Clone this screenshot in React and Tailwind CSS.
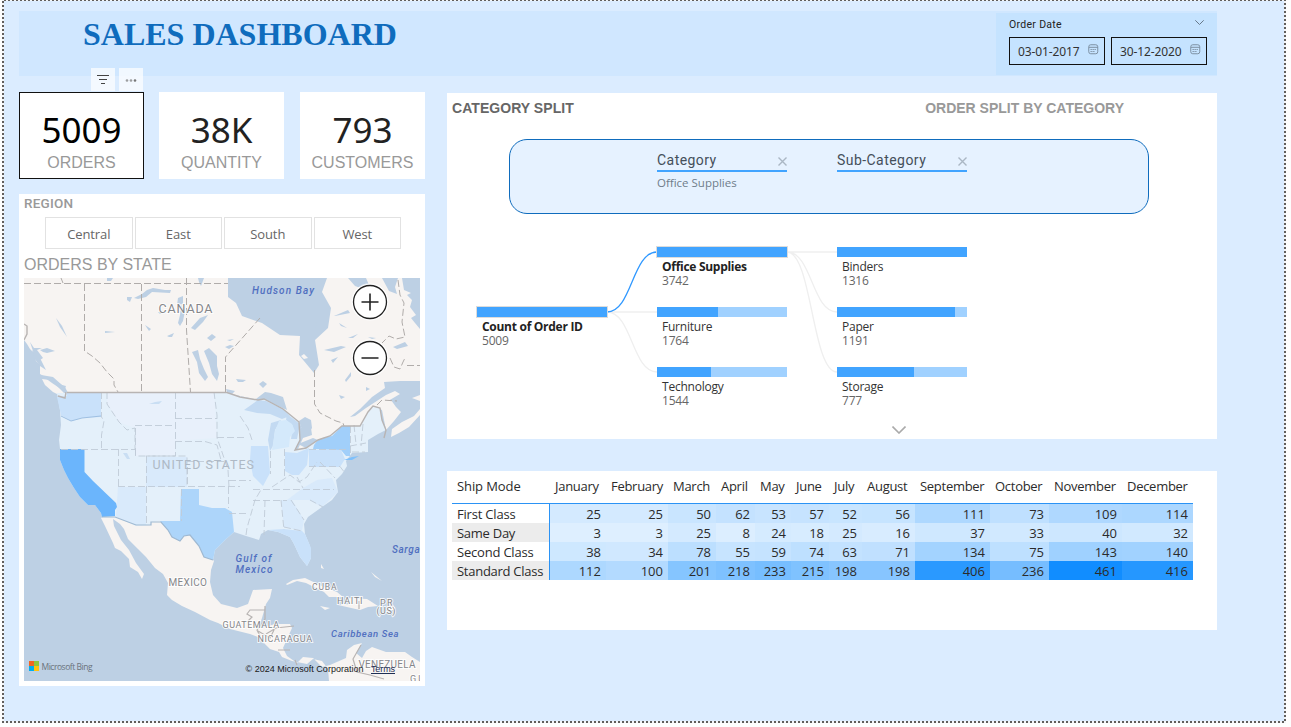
import React from "react";

const MONTHS = ["January", "February", "March", "April", "May", "June", "July", "August", "September", "October", "November", "December"];
const ROWS = [
  ["First Class", [25, 25, 50, 62, 53, 57, 52, 56, 111, 73, 109, 114]],
  ["Same Day", [3, 3, 25, 8, 24, 18, 25, 16, 37, 33, 40, 32]],
  ["Second Class", [38, 34, 78, 55, 59, 74, 63, 71, 134, 75, 143, 140]],
  ["Standard Class", [112, 100, 201, 218, 233, 215, 198, 198, 406, 236, 461, 416]],
];
const GRID = "grid grid-cols-[98px_56px_62px_48px_39px_36px_38px_33px_53px_75px_59px_73px_71px]";

function heat(value) {
  const t = (value - 3) / 458;
  return `rgb(${Math.round(222 - 205 * t)}, ${Math.round(239 - 98 * t)}, 255)`;
}

function Kpi({ value, label, selected }) {
  return (
    <div className={selected ? "h-[87px] w-[125px] border border-[#111] bg-white text-center text-black" : "h-[87px] w-[125px] border border-white bg-white text-center text-[#222]"}>
      <div className="mt-[16px] h-[42px] whitespace-nowrap font-['Noto_Sans',sans-serif] text-[35px] leading-[42px]">{value}</div>
      <div className="mt-px whitespace-nowrap font-['Liberation_Sans',sans-serif] text-[16px] leading-[22px] text-[#999]">{label}</div>
    </div>
  );
}

function CalendarIcon() {
  return (
    <svg className="mb-[3px] size-[11px]" viewBox="0 0 11 11" fill="none" stroke="#7d90a3">
      <rect x="0.75" y="0.75" width="9" height="9" rx="2" />
      <path d="M1 3.3H10" />
      <path d="M2.500 5.500H8.500M2.500 7.500H7" strokeDasharray="1.300 0.700" />
    </svg>
  );
}

function DateBox({ value }) {
  return (
    <div className="flex h-[28px] w-[96px] items-center justify-between border border-[#111] pr-[5px] pl-2 font-['Noto_Sans',sans-serif] text-[12px] text-[#333]">
      <span className="mt-px whitespace-nowrap tracking-[-0.12px]">{value}</span>
      <CalendarIcon />
    </div>
  );
}

function Level({ name, value }) {
  return (
    <div className="w-[130px]">
      <div className="flex h-[21px] items-start justify-between border-b-2 border-[#41a4ff]">
        <span className="-mt-px whitespace-nowrap font-['Roboto',sans-serif] text-[14px] leading-[20px] tracking-[0.45px] text-[#444f5a]">{name}</span>
        <svg className="mt-[6px] size-[9px]" viewBox="0 0 9 9" stroke="#aab7c4" strokeWidth="1.4"><path d="M0.5 0.5L8.5 8.5M8.5 0.5L0.5 8.5" /></svg>
      </div>
      <div className="mt-[3px] whitespace-nowrap font-['Open_Sans',sans-serif] text-[11.5px] leading-[16px] text-[#6f7d8a]">{value}</div>
    </div>
  );
}

function Node({ pos, name, value, fill, bold }) {
  return (
    <div className={`absolute w-[130px] ${pos}`}>
      <div className={bold ? "h-[10px] bg-[#a0d1ff] outline-1 outline-[#dcdcdc]" : "h-[10px] bg-[#a0d1ff]"}>
        <div className="h-full bg-[#41a4ff]" style={{ width: fill }} />
      </div>
      <div className={bold ? "mt-[3px] pl-[5px] text-[12px] font-bold leading-[14px] whitespace-nowrap tracking-[-0.28px] text-[#222]" : "mt-[3px] pl-[5px] text-[12px] leading-[14px] whitespace-nowrap tracking-[-0.22px] text-[#333]"}>{name}</div>
      <div className="pl-[5px] text-[12px] leading-[14px] tracking-[-0.2px] text-[#666]">{value}</div>
    </div>
  );
}

const LAKES = [
  "M134 298l8-4 5-4 6-2 12 2 6 0-1 3-18-1-6 5-8 2z", "M127 297l5 0-2 5-3-2z", "M178 298l5-2 0 8-6 1zM181 305l4 6-2 10-3 5-2-3 2-8z",
  "M191 328l9-10 8-3-5 7-8 8zM207 338l5-4 4 3-5 4z", "M204 351l5-3 8 8 0 10 2 8-2 7-5-7-3-11zM192 352l6-2 2 9 4 10 4 8-3 4-6-8-2-11z",
  "M167 336l7-3-2 4-3 0zM145 325l6 4-2 2zM105 331l10 1-10 1z", "M56 318l6 8 5 11-7-10z", "M40 350l7-2 8 3-8 2-4-1zM32 350l8 8 6 12-6-4-6-8z",
  "M41 375l12 2 9 8 4 1-2 5-12-8z", "M334 316l14-6 2 3-15 3zM339 323l8 5-6-2zM348 338l10-4-5 4z", "M324 350l17-4 5 1-12 5zM331 360l7-3-5 6z",
  "M345 380l6-8 0 4-5 6zM339 395l6 2-4 2zM366 387l4 2-4 2z", "M393 347l12-5 3 4-11 3zM368 337l8 1-4 1z",
  "M236 379l10 1-3 2-5 0zM259 384l4-3 4 3-4 4zM225 347l5-2 4 1-5 3zM227 340l7-1-4 2z M226 389l9 2-3 3-5-2z", "M107 278h6l-2 3-4 0zM198 278h6l-3 8-2-4z", "M315 321l2 3-2 4z",
  "M30 342l4 6 8 0-5 2 6 8-3 2-6-6z", "M158 312l5 0-3 2z",
];

const STATE_LINES = "M101.500 392V417L104 421L101.500 435V449M107 392V404L119 422L127 430L135 428V449M61 449.500H135M135 425.500H175M175.500 392V456H146M135.500 428V456M118.500 449V487M146.500 456V525M135.500 449V456H187V487M118 486.500H240M175 418.500H217M175 441.500H205L217 445L221 460M214 392L217 415V438L221 449L228 470L229 487M217 437.500H247M187 461.500H224M187.500 467V487M240 416L248 428L252 440M229 480.500H251M228.500 487V508M229 513.500H247M181.500 489V521M270.500 451V474M284.500 449V477M253 489.500H334M253 500.500H287M265 500L264 535M281 500L284 530M246 535L247 528L255 500L262 488M291 500L304 520M310 500L323 507M284 527L302 531M272 487L290 475L299 482L307 477L317 462M297 477L303 488M309 449.500H346M309 466.500H340L345 473M320 462L335 478M350.500 426V456M354 425L356 444M363 424L361 446M350 446L366 443M352 452H365";

function MapArt() {
  return (
    <svg className="size-full" viewBox="24 278 396 403">
      <rect x="24" y="278" width="396" height="403" fill="#bdd0e4" />
      <g fill="#f7f4f2">
        <path d="M24 278V340L27 344L30 349L34 353L36 361L40 365L40 374L47 378L56 381L65 387L68 393H227L240 396L258 400L283 409L299 422L302 428L311 428L312 435L303 438L298 449L295 451L306 448L318 441L330 437L342 426H360L368 413L373 406L382 410L386 430L394 421L401 412L396 407L391 400L388 401L400 394L395 391L386 395L366 408L355 416L350 417L360 409L372 397L385 388L384 382L400 381H420V329L415 323L411 318L416 315L410 307L412 300L407 295L411 293L404 290L402 278H398L395 287L397 294L389 291L382 278H366L372 292L355 286L348 278H327L322 292L331 308L328 328L315 340L319 365L314 373L299 355L300 336L280 335L262 323L242 316L236 303L228 297V278Z" />
        <path d="M391 437L392 429L402 422L414 416L420 409V415L409 427L399 433ZM412 398L420 395V401Z" />
        <path d="M301 356l3-2 4 4-4 1zM42 379l8 1 6 5 8 8-3 3-8-4-8-7z" />
        <path d="M101 518L105 526L113 543L115 548L121 551L129 559L130 567L138 572L142 579L144 574L136 563L129 550L121 540L114 526L113 519L120 524L124 529L128 539L138 549L146 557L155 568L163 574L168 583L167 595L172 600L182 606L195 612L210 620L218 623L230 629L250 634L258 637L270 649L279 652L282 657L292 661L307 664L313 659L322 661L328 669L329 681H420V662L412 657L405 652H386L372 647L366 651L362 658L356 653L362 643L354 645L347 650L346 658L330 665L322 667L313 658L303 657L297 663L287 656L283 648L292 628L290 624L275 624L258 629L262 618L266 604L270 598L272 589L253 590L248 604L237 608L221 604L213 595L210 582L211 570L214 561L205 550L190 530L160 515L118 508Z" />
        <path d="M286 584L293 580L305 578L324 587L337 592L343 597L329 597L324 592L306 583L297 581L287 585ZM345 598L367 599L378 606L368 607L360 610L338 605L350 604ZM320 606L330 608L325 610ZM388 607H395V610H388ZM371 572L382 581L375 577ZM321 564L324 569L321 568Z" />
      </g>
      <g fill="#bdd0e4">{LAKES.map((d, i) => <path key={i} d={d} />)}</g>
      <path fill="#bdd0e4" d="M252 402L265 392L271 393L283 397L287 410L264 400ZM299 421L305 417L311 420L312 428L308 434L301 427ZM298 444L313 438L318 440L306 448Z" />
      <path fill="#e4f0fa" d="M57 393H227L240 396L258 400L264 399L283 409L299 422L300 440L295 450L306 448L318 440L330 436L342 426H360L368 412L373 406L380 408L382 420L386 430L378 434L368 440L368 452L352 453L346 461L347 466L342 474L336 480L338 492L332 500L322 507L308 517L304 524L305 534L310 546L311 558L307 566L300 557L294 544L290 537L278 532L268 530L261 534L259 540L246 536L234 532L225 540L215 550L213 560L204 557L199 546L190 535L184 536L180 541L172 537L168 530L160 521L151 522V525L136 526L116 517L102 517L101 513L95 505L88 505L80 497L74 488L68 478L64 470L60 460V449L59 440L61 425L60 410Z" />
      <path fill="#e8f0fb" d="M107 392H214L217 438L175 441V456H135V428L119 422L107 404Z" />
      <path fill="#d4e7fb" d="M146 457H187V487H146ZM118 487H146V525L136 525L116 517ZM303 488L317 480L332 478L338 492L322 507L309 500H287L303 488ZM281 500L292 500L304 520L302 531L284 527Z" opacity=".7" />
      <path fill="#c3daf2" d="M244 410L258 400L266 401L283 409L290 416L282 419L270 414L257 413ZM271 423L281 420L275 430L273 446L270 451L268 440ZM287 414L300 424L297 439L291 439L293 426L286 420Z" />
      <path fill="#d4e9fb" d="M275 431L279 421L286 420L292 424L295 431L290 437L289 447L272 450Z" />
      <path fill="#c9e1fa" d="M57 397L67 396L66 392H101V417L82 418L71 421L61 415ZM251 446H268L270 473L263 486L253 476L250 460ZM285 452L297 453L309 448L307 465L299 475L292 475L285 471ZM309 450H341L345 459L340 467H309ZM268 530L284 529L302 531L305 534L311 548L311 558L307 566L300 557L294 544L290 537L278 532Z" />
      <path fill="#add5fa" d="M160 521H180L181 489H199V505L212 508L225 508L232 512L234 532L225 540L215 550L213 560L204 557L199 546L190 535L184 536L180 541L172 537L168 530Z" />
      <path fill="#a1cffa" d="M313 449L314 445L317 441L322 438L332 436L342 426H350V456L346 456L341 450Z" />
      <path fill="#7fc0fb" d="M344 460L352 457L359 456L352 460Z" />
      <path fill="#6bb5fc" d="M60 449H84.5V472L93 481L116 503L117 507L115 510L115 516L102 517L101 513L95 505L88 505L80 497L74 488L68 478L64 470L60 460Z" />
      <path d="M123 453l4 0 3 6-3 0zM149 404l6-2 7-1-3 3z" fill="#c9def3" />
      <path d={STATE_LINES} fill="none" stroke="#bfcbd7" strokeWidth="0.9" strokeDasharray="7 3" />
      <path d="M24 283.500H228M84.500 284V351L92 356L100 363L107 372L114 379L114 385L118 392M141.500 284V392M186.500 278V330L190.500 392M61 278L63 283M225.500 392V357L260 318M314.500 370V404L320 413L336 421L343 423L344 426M398 280L400 295L404 303L402 322L405 337L396 339L389 336L382 343M390 358L394 367L400 369L403 362L405 358M407 365.500H420M377 405L382 400L397 401" fill="none" stroke="#b0acaa" strokeDasharray="7 3" />
      <path d="M67 392.500H227L240 397L258 400L264 399L283 409L299 422L300 440L295 450L306 448L318 440L330 436L342 426H360L368 412L373 406L380 408L382 420L386 430L384 438M24 324L27 326L27 334L24 340M58 396L65 398L66 392" fill="none" stroke="#b8b4b3" strokeWidth="1.4" />
      <path d="M102 517H115L136 525L151 525V522H161L168 530L172 537L180 541L184 536L190 535L199 546L204 557L213 560" fill="none" stroke="#9fb9d2" strokeWidth="1.2" />
      <path d="M61 416L71 421L82 418L101 416" fill="none" stroke="#9fc0e2" />
      <path d="M265 606V619L257 630L260 636M265 610H250L247 614L252 617L247 622M266 634L276 628L294 626M278 650H290M295 660L297 665M361 645L353 659L357 672L370 675L384 679M359 601V609M258 631L270 638L274 630" fill="none" stroke="#b8b4b3" strokeWidth="1.2" />
      <g className="font-['Roboto',sans-serif]" fill="#85868a" stroke="#fff" strokeOpacity=".8" strokeWidth="2" paintOrder="stroke">
        <text x="158.500" y="313" fontSize="12.500" textLength="54">CANADA</text>
        <text x="152.500" y="469" fontSize="12.500" textLength="101.500" fill="#aeb9c5" stroke="none">UNITED STATES</text>
        <text x="168.500" y="586" fontSize="10" textLength="38.500">MEXICO</text>
        <text x="312" y="590" fontSize="8.500" textLength="24.500">CUBA</text>
        <text x="337" y="604" fontSize="9" textLength="25.500">HAITI</text>
        <text x="380" y="606" fontSize="9" textLength="12.500">PR</text>
        <text x="376.500" y="614" fontSize="9" textLength="19">(US)</text>
        <text x="222.500" y="628" fontSize="9" textLength="56.500">GUATEMALA</text>
        <text x="257.500" y="642" fontSize="9" textLength="54.500">NICARAGUA</text>
        <text x="358.500" y="668" fontSize="10" textLength="57">VENEZUELA</text>
        <text x="410" y="682" fontSize="9" textLength="14">GU</text>
      </g>
      <g className="font-['Roboto',sans-serif] italic" fill="#506fc0" fontWeight="500">
        <text x="252" y="294" fontSize="10" textLength="62">Hudson Bay</text>
        <text x="235.500" y="562" fontSize="10" textLength="36">Gulf of</text>
        <text x="235.500" y="573" fontSize="10" textLength="37">Mexico</text>
        <text x="392" y="553" fontSize="10" textLength="45">Sargasso</text>
        <text x="331" y="637" fontSize="9.500" textLength="67.500">Caribbean Sea</text>
      </g>
      <g fill="#fff" stroke="#222" strokeWidth="1.3">
        <circle cx="370" cy="302" r="18" stroke="#fff" strokeOpacity=".6" />
        <circle cx="370" cy="358" r="18" stroke="#fff" strokeOpacity=".6" />
        <circle cx="370" cy="302" r="16.500" />
        <circle cx="370" cy="358" r="16.500" />
        <path d="M361.500 302H378.500M370 293.500V310.500M361.500 358H378.500" strokeWidth="1.600" />
      </g>
      <path fill="#f26522" d="M29 661h5v5h-5z" /><path fill="#8dc63f" d="M34 661h5v5h-5z" />
      <path fill="#00aeef" d="M29 666h5v5h-5z" /><path fill="#ffc20e" d="M34 666h5v5h-5z" />
      <text x="41.500" y="669.500" fontSize="8.500" textLength="51" fill="#6b737c" className="font-['Open_Sans',sans-serif]">Microsoft Bing</text>
      <g className="font-['Liberation_Sans',sans-serif]" fontSize="9" fill="#1a1a1a">
        <text x="245.500" y="672" textLength="118">© 2024 Microsoft Corporation</text>
        <text x="371" y="672" textLength="24" fill="#1f2f55">Terms</text>
      </g>
      <path d="M371 673.500H395" stroke="#1f2f55" />
    </svg>
  );
}

export default function App() {
  return (
    <div className="h-[727px] w-[1291px] overflow-hidden bg-[#fefefe] pl-[2px]">
      <div className="-mt-px h-[724px] w-[1284px] bg-[#f3f5f8] bg-[conic-gradient(#605e5c_25%,transparent_0_50%,#605e5c_0_75%,transparent_0)] bg-[length:4px_4px] p-[2px]">
        <div className="h-[720px] bg-[#dbecff] pt-[10px] pl-[15px]">
          <header className="relative flex h-[65px] w-[1198px] justify-between bg-[#d0e7ff] pt-[2px]">
            <h1 className="mt-px ml-[64px] whitespace-nowrap font-['Liberation_Serif',serif] text-[32px] font-bold leading-[40px] text-[#0f6cbd]">SALES DASHBOARD</h1>
            <div className="absolute top-[57px] left-[72px] flex gap-1">
              <div className="flex h-[23px] w-6 items-center justify-center bg-white/70">
                <svg className="size-3" viewBox="0 0 12 12" stroke="#444"><path d="M0 1.500H12M2 5.500H10M4 9.500H8" /></svg>
              </div>
              <div className="flex h-[23px] w-6 items-center justify-center bg-white/70">
                <svg className="mt-px h-[3px] w-3" viewBox="0 0 12 3" fill="#777"><circle cx="2" cy="1.500" r="1.300" opacity=".7" /><circle cx="6" cy="1.500" r="1.300" opacity=".7" /><circle cx="10" cy="1.500" r="1.300" /></svg>
              </div>
            </div>
            <section className="h-[62px] w-[221px] bg-[#c5e3ff] px-[13px] pt-[5px] pr-[10px]">
              <div className="flex h-[12px] items-center justify-between">
                <span className="mt-[2px] font-['Roboto',sans-serif] text-[10.5px] leading-3 tracking-[0.3px] text-[#222]">Order Date</span>
                <svg className="mr-[3px] mb-[3px] h-[5px] w-[9px]" viewBox="0 0 9 5" fill="none" stroke="#66788a"><path d="M0.300 0.300L4.500 4.500L8.700 0.300" /></svg>
              </div>
              <div className="mt-[7px] flex gap-[6px]">
                <DateBox value="03-01-2017" />
                <DateBox value="30-12-2020" />
              </div>
            </section>
          </header>
          <main className="flex gap-[22px]">
            <div className="w-[406px] pt-4">
              <div className="flex justify-between">
                <Kpi value="5009" label="ORDERS" selected />
                <div className="flex gap-4">
                  <Kpi value="38K" label="QUANTITY" />
                  <Kpi value="793" label="CUSTOMERS" />
                </div>
              </div>
              <section className="mt-[15px] h-[492px] bg-white px-[5px]">
                <h2 className="h-[23px] pt-px font-['Roboto',sans-serif] text-[13.5px] font-medium leading-4 tracking-[0.2px] text-[#999]">REGION</h2>
                <div className="ml-[21px] flex gap-[2px]">
                  {["Central", "East", "South", "West"].map((r) => (
                    <button key={r} className="h-8 w-[87.500px] border border-[#e2e2e2] pt-[3px] font-['Open_Sans',sans-serif] text-[13px] tracking-[-0.1px] text-[#666]">{r}</button>
                  ))}
                </div>
                <h2 className="h-[29px] pt-[6px] font-['Liberation_Sans',sans-serif] text-[16px] leading-5 text-[#999]">ORDERS BY STATE</h2>
                <div className="h-[403px] w-[396px]"><MapArt /></div>
              </section>
            </div>
            <div className="flex w-[770px] flex-col gap-8 pt-[17px]">
              <section className="relative h-[346px] bg-white">
                <div className="flex justify-between pt-[6px] pr-[93px] pl-[5px] font-['Liberation_Sans',sans-serif] text-[14px] font-bold leading-[18px]">
                  <h2 className="tracking-[0.05px] text-[#666]">CATEGORY SPLIT</h2>
                  <h2 className="text-[#999]">ORDER SPLIT BY CATEGORY</h2>
                </div>
                <div className="mt-[22px] ml-[62px] flex h-[75px] w-[640px] gap-[50px] rounded-[18px] border border-[#0f6cbd] bg-[#e6f2ff] pt-[11px] pl-[147px]">
                  <Level name="Category" value="Office Supplies" />
                  <Level name="Sub-Category" value="" />
                </div>
                <div className="relative h-[215px] font-['Open_Sans',sans-serif]">
                  <svg className="absolute top-[23px] left-[160px] h-[160px] w-[230px]" viewBox="607 237 230 160" fill="none" stroke="#efefef" strokeWidth="1.300">
                    <path d="M787 252H837M787 252C812 252 812 312 837 312M787 252C812 252 812 372 837 372M607 312H657M607 312C632 312 632 372 657 372" />
                    <path d="M607 312C632 312 632 252 657 252" stroke="#2f98ff" />
                  </svg>
                  <Node pos="left-[30px] top-[93px]" name="Count of Order ID" value="5009" fill="100%" bold />
                  <Node pos="left-[210px] top-[33px]" name="Office Supplies" value="3742" fill="100%" bold />
                  <Node pos="left-[210px] top-[93px]" name="Furniture" value="1764" fill="47.1%" />
                  <Node pos="left-[210px] top-[153px]" name="Technology" value="1544" fill="41.3%" />
                  <Node pos="left-[390px] top-[33px]" name="Binders" value="1316" fill="100%" />
                  <Node pos="left-[390px] top-[93px]" name="Paper" value="1191" fill="90.5%" />
                  <Node pos="left-[390px] top-[153px]" name="Storage" value="777" fill="59%" />
                  <svg className="absolute top-[212px] left-[445px] h-[8px] w-[14px]" viewBox="0 0 14 8" fill="none" stroke="#aaa" strokeWidth="1.600"><path d="M0.500 0.500L7 7L13.500 0.500" /></svg>
                </div>
              </section>
              <section className="h-[159px] bg-white pl-[5px] font-['Open_Sans',sans-serif] text-[13px] text-[#2b2b2b]">
                <div className={`${GRID} h-[33px] w-[741px] border-b border-[#2b93f5] leading-[31px] tracking-[-0.28px]`}>
                  {["Ship Mode", ...MONTHS].map((m) => <div key={m} className={m === "Ship Mode" ? "pl-[5px] whitespace-nowrap tracking-[-0.1px]" : "pl-[5px] whitespace-nowrap"}>{m}</div>)}
                </div>
                {ROWS.map(([mode, values]) => (
                  <div key={mode} className={`${GRID} h-[19px] w-[741px] leading-[18px]`}>
                    <div className={mode[1] === "a" || mode[1] === "t" ? "border-r border-[#2b93f5] bg-[#ececec] pt-px pl-[5px] tracking-[-0.27px] whitespace-nowrap" : "border-r border-[#2b93f5] pt-px pl-[5px] tracking-[-0.2px] whitespace-nowrap"}>{mode}</div>
                    {values.map((v, i) => <div key={i} className="pt-px pr-[5px] text-right" style={{ background: heat(v) }}>{v}</div>)}
                  </div>
                ))}
              </section>
            </div>
          </main>
        </div>
      </div>
    </div>
  );
}
